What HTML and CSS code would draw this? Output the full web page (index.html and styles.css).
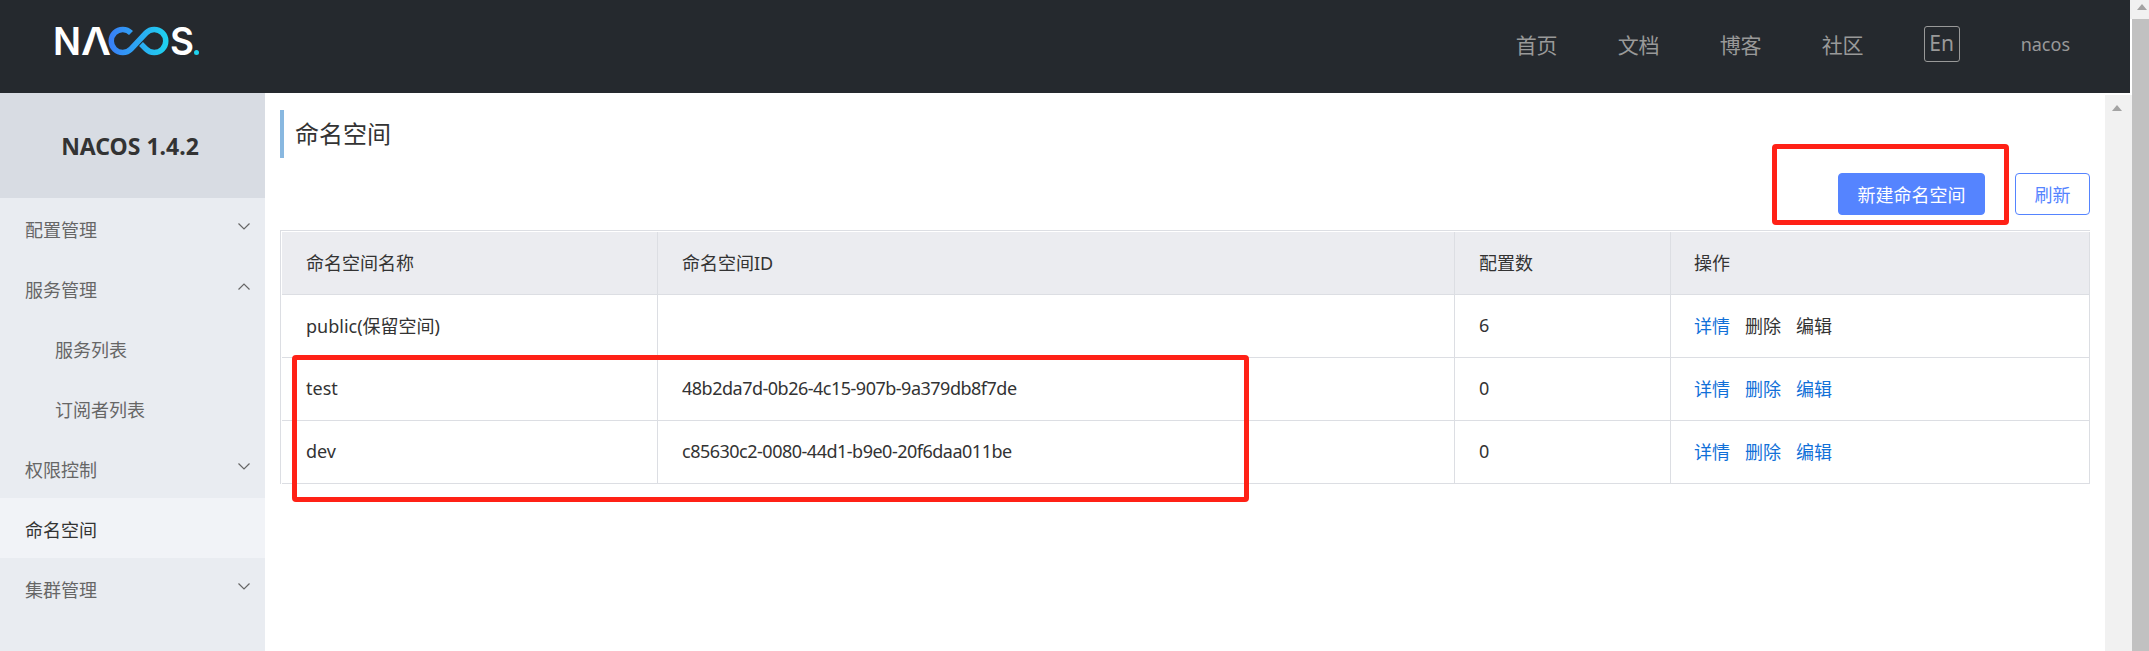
FILE: index.html
```html
<!DOCTYPE html>
<html lang="zh-CN">
<head>
    <meta charset="UTF-8">
    <title>Nacos - 命名空间</title>
    <link rel="stylesheet" href="styles.css">
</head>
<body>
    <div class="app">
        <header class="header">
            <svg class="logo" width="170" height="60" viewBox="40 11 170 60" role="img" aria-label="NACOS">
                <defs>
                    <linearGradient id="logoGrad" x1="108" y1="0" x2="168" y2="0" gradientUnits="userSpaceOnUse">
                        <stop offset="0" stop-color="#3a7cf8"/>
                        <stop offset="1" stop-color="#1ed3ee"/>
                    </linearGradient>
                </defs>
                <text class="logo-text" x="53" y="55" textLength="28" lengthAdjust="spacingAndGlyphs">N</text>
                <text class="logo-text" x="81" y="55" textLength="30" lengthAdjust="spacingAndGlyphs">Λ</text>
                <path d="M131 33 A11.5 11.5 0 1 0 131 49 L146 33 A11.5 11.5 0 1 1 146 49 L141 44" fill="none" stroke="url(#logoGrad)" stroke-width="5.5"/>
                <text class="logo-text" x="170" y="55" textLength="24" lengthAdjust="spacingAndGlyphs">S</text>
                <circle cx="196.500" cy="52.500" r="2.500" fill="#1ed3ee"/>
            </svg>
            <nav class="nav">
                <a>首页</a>
                <a>文档</a>
                <a>博客</a>
                <a>社区</a>
                <span class="lang">En</span>
                <span class="user">nacos</span>
            </nav>
        </header>
        <div class="body-row">
            <aside class="sidebar">
                <div class="version">NACOS 1.4.2</div>
                <ul class="menu">
                    <li>配置管理<svg class="chevron" width="12" height="7" viewBox="0 0 12 7"><path d="M.5.5 6 6 11.500.5"/></svg></li>
                    <li>服务管理<svg class="chevron" width="12" height="7" viewBox="0 0 12 7"><path d="M.5 6.500 6 1 11.500 6.500"/></svg></li>
                    <li class="sub">服务列表</li>
                    <li class="sub">订阅者列表</li>
                    <li>权限控制<svg class="chevron" width="12" height="7" viewBox="0 0 12 7"><path d="M.5.5 6 6 11.500.5"/></svg></li>
                    <li class="active">命名空间</li>
                    <li>集群管理<svg class="chevron" width="12" height="7" viewBox="0 0 12 7"><path d="M.5.5 6 6 11.500.5"/></svg></li>
                </ul>
            </aside>
            <main class="main">
                <h1 class="page-title">命名空间</h1>
                <div class="toolbar">
                    <button class="btn btn-primary">新建命名空间</button>
                    <button class="btn btn-outline">刷新</button>
                </div>
                <div class="table-wrap">
                    <table>
                        <colgroup>
                            <col class="col-name">
                            <col class="col-id">
                            <col class="col-count">
                            <col class="col-ops">
                        </colgroup>
                        <thead>
                            <tr>
                                <th>命名空间名称</th>
                                <th>命名空间ID</th>
                                <th>配置数</th>
                                <th class="ops-cell">操作</th>
                            </tr>
                        </thead>
                        <tbody>
                            <tr>
                                <td>public(保留空间)</td>
                                <td></td>
                                <td>6</td>
                                <td class="ops-cell"><div class="ops"><a class="link">详情</a><a>删除</a><a>编辑</a></div></td>
                            </tr>
                            <tr>
                                <td>test</td>
                                <td class="uuid">48b2da7d-0b26-4c15-907b-9a379db8f7de</td>
                                <td>0</td>
                                <td class="ops-cell"><div class="ops"><a class="link">详情</a><a class="link">删除</a><a class="link">编辑</a></div></td>
                            </tr>
                            <tr>
                                <td>dev</td>
                                <td class="uuid">c85630c2-0080-44d1-b9e0-20f6daa011be</td>
                                <td>0</td>
                                <td class="ops-cell"><div class="ops"><a class="link">详情</a><a class="link">删除</a><a class="link">编辑</a></div></td>
                            </tr>
                        </tbody>
                    </table>
                </div>
            </main>
            <div class="inner-scroll"><span class="arrow"></span></div>
        </div>
    </div>
    <div class="page-scroll">
        <div class="page-scroll-btn"><span class="arrow"></span></div>
        <div class="page-scroll-thumb"></div>
    </div>

    <!-- red annotation boxes drawn over the screenshot -->
    <div class="mark mark-button"></div>
    <div class="mark mark-rows"></div>
</body>
</html>
```

FILE: styles.css
```css
:root {
    --header-color: #25292e;
    --side-color: #e9ecf1;
    --side-title: #d8dce3;
    --side-active: #f1f3f7;
    --line-color: #dcdee3;
    --primary-color: #5584ff;
    --link-color: #1170d8;
    --mark-color: #ff2116;
    --track-color: #f1f1f1;
}
* {
    box-sizing: border-box;
    margin: 0;
    padding: 0;
}
html, body {
    height: 100%;
    overflow: hidden;
}
body {
    display: flex;
    position: relative;
    background: #fff;
    color: #333;
    font-family: "Noto Sans", "Noto Sans CJK SC", sans-serif;
    font-size: 18px;
}
.app {
    flex: 1;
    min-width: 0;
    display: flex;
    flex-direction: column;
}

/* header */
.header {
    height: 93px;
    margin-right: 2px;
    padding: 0 60px 0 40px;
    background: var(--header-color);
    display: flex;
    align-items: flex-start;
}
.logo {
    margin-top: 11px;
}
.logo-text {
    fill: #fff;
    font-family: Inter, sans-serif;
    font-size: 38px;
    font-weight: 600;
}
.nav {
    margin-left: auto;
    margin-top: 26px;
    height: 36px;
    display: flex;
    align-items: center;
    gap: 60px;
    color: #999;
    font-size: 21px;
}
.lang {
    width: 36px;
    height: 36px;
    margin-right: 1px;
    border: 1px solid #999;
    border-radius: 3px;
    text-align: center;
    line-height: 32px;
}
.user {
    font-size: 18px;
}

/* body */
.body-row {
    flex: 1;
    min-height: 0;
    display: flex;
}
.sidebar {
    width: 265px;
    background: var(--side-color);
}
.version {
    height: 105px;
    padding-right: 5px;
    background: var(--side-title);
    display: flex;
    align-items: center;
    justify-content: center;
    font-size: 23px;
    font-weight: 700;
}
.menu {
    list-style: none;
}
.menu li {
    height: 60px;
    padding: 2px 15px 0 25px;
    display: flex;
    align-items: center;
    justify-content: space-between;
    color: #666;
}
.menu li.sub {
    padding-left: 55px;
}
.menu li.active {
    background: var(--side-active);
    color: #333;
}
.chevron {
    margin-top: -6px;
}
.chevron path {
    fill: none;
    stroke: #666;
    stroke-width: 1.2;
}

.main {
    flex: 1;
    min-width: 0;
    padding: 17px 15px 0;
}
.page-title {
    height: 48px;
    border-left: 4px solid #89b8e0;
    padding-left: 11px;
    font-size: 24px;
    font-weight: 400;
    line-height: 48px;
}
.toolbar {
    margin-top: 15px;
    display: flex;
    justify-content: flex-end;
    gap: 30px;
}
.btn {
    height: 42px;
    border: 1px solid var(--primary-color);
    border-radius: 4px;
    font-family: inherit;
    font-size: 18px;
}
.btn-primary {
    width: 147px;
    background: var(--primary-color);
    color: #fff;
}
.btn-outline {
    width: 75px;
    background: #fff;
    color: var(--primary-color);
}

/* table */
.table-wrap {
    margin-top: 15px;
    border-top: 1px solid var(--line-color);
    border-left: 1px solid var(--line-color);
    padding-top: 1px;
    padding-left: 1px;
}
table {
    width: 100%;
    table-layout: fixed;
    border-collapse: separate;
    border-spacing: 0;
}
.col-name { width: 376px; }
.col-id { width: 797px; }
.col-count { width: 216px; }
.col-ops { width: 419px; }
th, td {
    height: 63px;
    padding: 0 24px 2px;
    border-right: 1px solid var(--line-color);
    border-bottom: 1px solid var(--line-color);
    text-align: left;
    font-weight: 400;
}
th {
    background: #ebecf0;
}
.uuid {
    letter-spacing: -.5px;
}
th.ops-cell, td.ops-cell {
    padding-left: 23px;
}
.ops {
    display: flex;
    gap: 15px;
}
.link {
    color: var(--link-color);
}

/* scrollbars */
.inner-scroll {
    width: 27px;
    background: var(--track-color);
    margin-top: 2px;
    padding-top: 10px;
    display: flex;
    justify-content: center;
}
.arrow {
    display: block;
    width: 0;
    height: 0;
    border-left: 5.500px solid transparent;
    border-right: 5.500px solid transparent;
    border-bottom: 6px solid #a3a3a3;
}
.inner-scroll .arrow {
    margin-right: 3px;
}
.page-scroll {
    width: 17px;
    display: flex;
    flex-direction: column;
}
.page-scroll-btn {
    height: 19px;
    margin-left: -2px;
    background: var(--track-color);
    padding-top: 4px;
    padding-left: 7px;
}
.page-scroll-thumb {
    flex: 1;
    background: #c1c1c1;
}

/* annotations */
.mark {
    position: absolute;
    border: 5px solid var(--mark-color);
    border-radius: 4px;
}
.mark-button {
    left: 1772px;
    top: 144px;
    width: 237px;
    height: 81px;
}
.mark-rows {
    left: 292px;
    top: 355px;
    width: 957px;
    height: 147px;
}
```
